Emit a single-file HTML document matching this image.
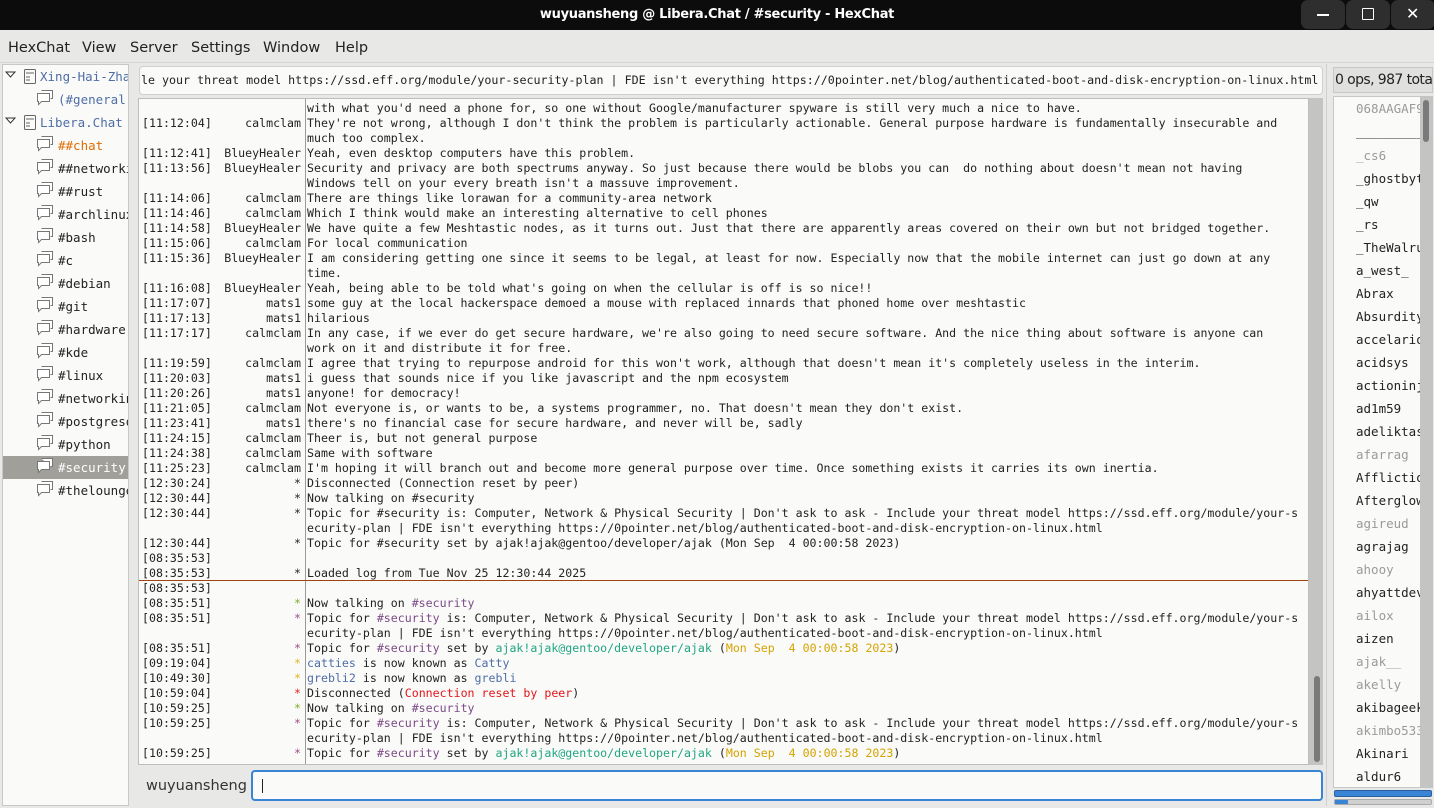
<!DOCTYPE html>
<html><head><meta charset="utf-8"><style>
*{margin:0;padding:0;box-sizing:border-box}
body{width:1434px;height:808px;background:#e8e8e7;font-family:"DejaVu Sans","Liberation Sans",sans-serif;position:relative;overflow:hidden;color:#222}
.title{position:absolute;left:0;top:0;width:1434px;height:30px;background:#0c0c0c;color:#fff;font-weight:bold;font-size:13px;text-align:center;line-height:30px;letter-spacing:-0.3px}
.wb{position:absolute;top:0;width:44px;height:29px;background:#2e2e2e;border-radius:7px}
.menu{position:absolute;top:32px;left:0;width:1434px;height:32px;font-size:14.5px;line-height:32px}
.menu span{position:absolute}
.tree{position:absolute;left:2px;top:64px;width:127px;height:742px;background:#fafaf9;border:1px solid #c8c8c8;overflow:hidden;font-family:"DejaVu Sans Mono",monospace;font-size:12.5px}
.ti{position:absolute;height:23px;line-height:23px;white-space:nowrap}
.sel{position:absolute;left:0;width:127px;height:23px;background:#a09f99}
.mono{font-family:"DejaVu Sans Mono","Liberation Mono",monospace}
.topic{position:absolute;left:139px;top:66px;width:1184px;height:29px;background:#fafaf9;border:1px solid #cfcfcf;border-radius:4px;font-size:11.65px;line-height:27px;padding-left:1px;white-space:pre;overflow:hidden}
.chat{position:absolute;left:138px;top:98px;width:1171px;height:667px;background:#fafaf9;border:1px solid #bdbdbd;overflow:hidden;font-size:11.6px}
.sep{position:absolute;left:166px;top:0;width:1px;height:667px;background:#9a9a9a}
.r{position:absolute;left:0;height:15px;line-height:15px;white-space:pre;width:1170px;margin-top:1px}
.t{position:absolute;left:3px}
.n{position:absolute;right:1008px;text-align:right}
.x{position:absolute;left:168px}
.ch{color:#7c4a86}.aj{color:#22a582}.dt{color:#d4a300}.nk{color:#4f6ea6}.rd{color:#e2161a}
.sg{color:#7cae2a}.sp{color:#9b4f88}.sy{color:#e0b520}.sr{color:#e22}
.ul{position:absolute;left:1333px;top:96px;width:88px;height:692px;background:#fafaf9;border:1px solid #c8c8c8;overflow:hidden;font-size:12.5px}
.u{position:absolute;left:22px;height:23px;line-height:23px;white-space:nowrap}
.g{color:#9a9a9a}
</style></head><body>
<div class="title">wuyuansheng @ Libera.Chat / #security - HexChat</div>
<div class="wb" style="left:1301px"><div style="position:absolute;left:16px;top:14px;width:12px;height:1.5px;background:#fff"></div></div>
<div class="wb" style="left:1346px"><div style="position:absolute;left:16px;top:8px;width:12px;height:12px;border:1.5px solid #fff;border-radius:1px"></div></div>
<div class="wb" style="left:1391px"><div style="position:absolute;left:15px;top:6px;color:#fff;font-size:16px;line-height:16px">✕</div></div>
<div class="menu"><span style="left:8px">HexChat</span><span style="left:82px">View</span><span style="left:130px">Server</span><span style="left:191px">Settings</span><span style="left:263px">Window</span><span style="left:335px">Help</span></div>
<div style="position:absolute;left:0;top:62px;width:1434px;height:1px;background:#d6d6d6"></div>

<div class="tree">
<div class="sel" style="top:391px"></div>
<svg width="127" height="440" style="position:absolute;left:0;top:0" fill="none" stroke="#666" stroke-width="1">
<path d="M3 7h9l-4.5 5z" fill="#fff" stroke="#333"/><path d="M3 53h9l-4.5 5z" fill="#fff" stroke="#333"/>
<rect x="21.5" y="4.5" width="11" height="14" rx="1"/><path d="M23 8h8M23 12h4M23 15h4"/>
<rect x="21.5" y="50.5" width="11" height="14" rx="1"/><path d="M23 54h8M23 58h4M23 61h4"/>
</svg>
<div class="ti" style="left:37px;top:0;color:#4f6ea6">Xing-Hai-Zhan</div>
<div class="ti" style="left:55px;top:23px;color:#4f6ea6">(#general)</div>
<div class="ti" style="left:37px;top:46px;color:#4f6ea6">Libera.Chat</div>
<div class="ti" style="left:55px;top:69px;color:#e06c00">##chat</div>
<div class="ti" style="left:55px;top:92px">##networking</div>
<div class="ti" style="left:55px;top:115px">##rust</div>
<div class="ti" style="left:55px;top:138px">#archlinux</div>
<div class="ti" style="left:55px;top:161px">#bash</div>
<div class="ti" style="left:55px;top:184px">#c</div>
<div class="ti" style="left:55px;top:207px">#debian</div>
<div class="ti" style="left:55px;top:230px">#git</div>
<div class="ti" style="left:55px;top:253px">#hardware</div>
<div class="ti" style="left:55px;top:276px">#kde</div>
<div class="ti" style="left:55px;top:299px">#linux</div>
<div class="ti" style="left:55px;top:322px">#networking</div>
<div class="ti" style="left:55px;top:345px">#postgresql</div>
<div class="ti" style="left:55px;top:368px">#python</div>
<div class="ti" style="left:55px;top:391px;color:#fff">#security</div>
<div class="ti" style="left:55px;top:414px">#thelounge</div>
<svg width="30" height="440" style="position:absolute;left:32px;top:0" fill="#fff" stroke="#777" stroke-width="1">
<defs><g id="ic"><path d="M6.5 3.5h11v8h-2"/><path d="M2.5 6.5h12v8h-8l-3 3v-3h-1z"/></g></defs>
<use href="#ic" y="22"/><use href="#ic" y="68"/><use href="#ic" y="91"/><use href="#ic" y="114"/><use href="#ic" y="137"/><use href="#ic" y="160"/><use href="#ic" y="183"/><use href="#ic" y="206"/><use href="#ic" y="229"/><use href="#ic" y="252"/><use href="#ic" y="275"/><use href="#ic" y="298"/><use href="#ic" y="321"/><use href="#ic" y="344"/><use href="#ic" y="367"/><use href="#ic" y="390"/><use href="#ic" y="413"/>
</svg>
</div>

<div class="topic mono">le your threat model https://ssd.eff.org/module/your-security-plan | FDE isn't everything https://0pointer.net/blog/authenticated-boot-and-disk-encryption-on-linux.html</div>

<div class="chat mono">
<div class="sep"></div>
<div style="position:absolute;left:0;top:481px;width:1170px;height:1px;background:#a0430e"></div>
<div class="r" style="top:1px"><span class="x">with what you'd need a phone for, so one without Google/manufacturer spyware is still very much a nice to have.</span></div>
<div class="r" style="top:16px"><span class="t">[11:12:04]</span><span class="n">calmclam</span><span class="x">They're not wrong, although I don't think the problem is particularly actionable. General purpose hardware is fundamentally insecurable and</span></div>
<div class="r" style="top:31px"><span class="x">much too complex.</span></div>
<div class="r" style="top:46px"><span class="t">[11:12:41]</span><span class="n">BlueyHealer</span><span class="x">Yeah, even desktop computers have this problem.</span></div>
<div class="r" style="top:61px"><span class="t">[11:13:56]</span><span class="n">BlueyHealer</span><span class="x">Security and privacy are both spectrums anyway. So just because there would be blobs you can  do nothing about doesn't mean not having</span></div>
<div class="r" style="top:76px"><span class="x">Windows tell on your every breath isn't a massuve improvement.</span></div>
<div class="r" style="top:91px"><span class="t">[11:14:06]</span><span class="n">calmclam</span><span class="x">There are things like lorawan for a community-area network</span></div>
<div class="r" style="top:106px"><span class="t">[11:14:46]</span><span class="n">calmclam</span><span class="x">Which I think would make an interesting alternative to cell phones</span></div>
<div class="r" style="top:121px"><span class="t">[11:14:58]</span><span class="n">BlueyHealer</span><span class="x">We have quite a few Meshtastic nodes, as it turns out. Just that there are apparently areas covered on their own but not bridged together.</span></div>
<div class="r" style="top:136px"><span class="t">[11:15:06]</span><span class="n">calmclam</span><span class="x">For local communication</span></div>
<div class="r" style="top:151px"><span class="t">[11:15:36]</span><span class="n">BlueyHealer</span><span class="x">I am considering getting one since it seems to be legal, at least for now. Especially now that the mobile internet can just go down at any</span></div>
<div class="r" style="top:166px"><span class="x">time.</span></div>
<div class="r" style="top:181px"><span class="t">[11:16:08]</span><span class="n">BlueyHealer</span><span class="x">Yeah, being able to be told what's going on when the cellular is off is so nice!!</span></div>
<div class="r" style="top:196px"><span class="t">[11:17:07]</span><span class="n">mats1</span><span class="x">some guy at the local hackerspace demoed a mouse with replaced innards that phoned home over meshtastic</span></div>
<div class="r" style="top:211px"><span class="t">[11:17:13]</span><span class="n">mats1</span><span class="x">hilarious</span></div>
<div class="r" style="top:226px"><span class="t">[11:17:17]</span><span class="n">calmclam</span><span class="x">In any case, if we ever do get secure hardware, we're also going to need secure software. And the nice thing about software is anyone can</span></div>
<div class="r" style="top:241px"><span class="x">work on it and distribute it for free.</span></div>
<div class="r" style="top:256px"><span class="t">[11:19:59]</span><span class="n">calmclam</span><span class="x">I agree that trying to repurpose android for this won't work, although that doesn't mean it's completely useless in the interim.</span></div>
<div class="r" style="top:271px"><span class="t">[11:20:03]</span><span class="n">mats1</span><span class="x">i guess that sounds nice if you like javascript and the npm ecosystem</span></div>
<div class="r" style="top:286px"><span class="t">[11:20:26]</span><span class="n">mats1</span><span class="x">anyone! for democracy!</span></div>
<div class="r" style="top:301px"><span class="t">[11:21:05]</span><span class="n">calmclam</span><span class="x">Not everyone is, or wants to be, a systems programmer, no. That doesn't mean they don't exist.</span></div>
<div class="r" style="top:316px"><span class="t">[11:23:41]</span><span class="n">mats1</span><span class="x">there's no financial case for secure hardware, and never will be, sadly</span></div>
<div class="r" style="top:331px"><span class="t">[11:24:15]</span><span class="n">calmclam</span><span class="x">Theer is, but not general purpose</span></div>
<div class="r" style="top:346px"><span class="t">[11:24:38]</span><span class="n">calmclam</span><span class="x">Same with software</span></div>
<div class="r" style="top:361px"><span class="t">[11:25:23]</span><span class="n">calmclam</span><span class="x">I'm hoping it will branch out and become more general purpose over time. Once something exists it carries its own inertia.</span></div>
<div class="r" style="top:376px"><span class="t">[12:30:24]</span><span class="n">*</span><span class="x">Disconnected (Connection reset by peer)</span></div>
<div class="r" style="top:391px"><span class="t">[12:30:44]</span><span class="n">*</span><span class="x">Now talking on #security</span></div>
<div class="r" style="top:406px"><span class="t">[12:30:44]</span><span class="n">*</span><span class="x">Topic for #security is: Computer, Network &amp; Physical Security | Don't ask to ask - Include your threat model https://ssd.eff.org/module/your-s</span></div>
<div class="r" style="top:421px"><span class="x">ecurity-plan | FDE isn't everything https://0pointer.net/blog/authenticated-boot-and-disk-encryption-on-linux.html</span></div>
<div class="r" style="top:436px"><span class="t">[12:30:44]</span><span class="n">*</span><span class="x">Topic for #security set by ajak!ajak@gentoo/developer/ajak (Mon Sep  4 00:00:58 2023)</span></div>
<div class="r" style="top:451px"><span class="t">[08:35:53]</span></div>
<div class="r" style="top:466px"><span class="t">[08:35:53]</span><span class="n">*</span><span class="x">Loaded log from Tue Nov 25 12:30:44 2025</span></div>
<div class="r" style="top:481px"><span class="t">[08:35:53]</span></div>
<div class="r" style="top:496px"><span class="t">[08:35:51]</span><span class="n sg">*</span><span class="x">Now talking on <span class="ch">#security</span></span></div>
<div class="r" style="top:511px"><span class="t">[08:35:51]</span><span class="n sp">*</span><span class="x">Topic for <span class="ch">#security</span> is: Computer, Network &amp; Physical Security | Don't ask to ask - Include your threat model https://ssd.eff.org/module/your-s</span></div>
<div class="r" style="top:526px"><span class="x">ecurity-plan | FDE isn't everything https://0pointer.net/blog/authenticated-boot-and-disk-encryption-on-linux.html</span></div>
<div class="r" style="top:541px"><span class="t">[08:35:51]</span><span class="n sp">*</span><span class="x">Topic for <span class="ch">#security</span> set by <span class="aj">ajak!ajak@gentoo/developer/ajak</span> (<span class="dt">Mon Sep  4 00:00:58 2023</span>)</span></div>
<div class="r" style="top:556px"><span class="t">[09:19:04]</span><span class="n sy">*</span><span class="x"><span class="nk">catties</span> is now known as <span class="nk">Catty</span></span></div>
<div class="r" style="top:571px"><span class="t">[10:49:30]</span><span class="n sy">*</span><span class="x"><span class="nk">grebli2</span> is now known as <span class="nk">grebli</span></span></div>
<div class="r" style="top:586px"><span class="t">[10:59:04]</span><span class="n sr">*</span><span class="x">Disconnected (<span class="rd">Connection reset by peer</span>)</span></div>
<div class="r" style="top:601px"><span class="t">[10:59:25]</span><span class="n sg">*</span><span class="x">Now talking on <span class="ch">#security</span></span></div>
<div class="r" style="top:616px"><span class="t">[10:59:25]</span><span class="n sp">*</span><span class="x">Topic for <span class="ch">#security</span> is: Computer, Network &amp; Physical Security | Don't ask to ask - Include your threat model https://ssd.eff.org/module/your-s</span></div>
<div class="r" style="top:631px"><span class="x">ecurity-plan | FDE isn't everything https://0pointer.net/blog/authenticated-boot-and-disk-encryption-on-linux.html</span></div>
<div class="r" style="top:646px"><span class="t">[10:59:25]</span><span class="n sp">*</span><span class="x">Topic for <span class="ch">#security</span> set by <span class="aj">ajak!ajak@gentoo/developer/ajak</span> (<span class="dt">Mon Sep  4 00:00:58 2023</span>)</span></div>
</div>
<div style="position:absolute;left:1309px;top:98px;width:14px;height:667px;background:#c4c4c3"></div>
<div style="position:absolute;left:1314px;top:676px;width:6px;height:86px;background:#7a7a7a;border-radius:3px"></div>

<div style="position:absolute;left:146px;top:778px;font-size:14.5px;color:#333">wuyuansheng</div>
<div style="position:absolute;left:251px;top:770px;width:1072px;height:31px;background:#fafaf9;border:2px solid #3a84d6;border-radius:4px"><div style="position:absolute;left:9px;top:7px;width:1px;height:14px;background:#222"></div></div>

<div style="position:absolute;left:1326px;top:64px;width:1px;height:742px;background:#d0d0d0"></div>
<div style="position:absolute;left:1333px;top:67px;width:100px;height:26px;background:#e0e0df;border:1px solid #c8c8c8;font-size:14px;letter-spacing:-0.6px;line-height:24px;white-space:nowrap;overflow:hidden;padding-left:1px">0 ops, 987 total</div>
<div class="ul mono">
<div class="u g" style="top:0">068AAGAF9</div>
<div class="u" style="top:23px">_________</div>
<div class="u g" style="top:47px">_cs6</div>
<div class="u" style="top:70px">_ghostbyte</div>
<div class="u" style="top:93px">_qw</div>
<div class="u" style="top:116px">_rs</div>
<div class="u" style="top:139px">_TheWalrus</div>
<div class="u" style="top:162px">a_west_</div>
<div class="u" style="top:185px">Abrax</div>
<div class="u" style="top:208px">Absurdity</div>
<div class="u" style="top:231px">accelarion</div>
<div class="u" style="top:254px">acidsys</div>
<div class="u" style="top:277px">actioninja</div>
<div class="u" style="top:300px">ad1m59</div>
<div class="u" style="top:323px">adeliktas</div>
<div class="u g" style="top:346px">afarrag</div>
<div class="u" style="top:369px">Affliction</div>
<div class="u" style="top:392px">Afterglow</div>
<div class="u g" style="top:415px">agireud</div>
<div class="u" style="top:438px">agrajag</div>
<div class="u g" style="top:461px">ahooy</div>
<div class="u" style="top:484px">ahyattdev</div>
<div class="u g" style="top:507px">ailox</div>
<div class="u" style="top:530px">aizen</div>
<div class="u g" style="top:553px">ajak__</div>
<div class="u g" style="top:576px">akelly</div>
<div class="u" style="top:599px">akibageek</div>
<div class="u g" style="top:622px">akimbo533</div>
<div class="u" style="top:645px">Akinari</div>
<div class="u" style="top:668px">aldur6</div>
</div>
<div style="position:absolute;left:1420px;top:96px;width:13px;height:692px;background:#c4c4c3"></div>
<div style="position:absolute;left:1423px;top:100px;width:6px;height:42px;background:#7a7a7a;border-radius:3px"></div>
<div style="position:absolute;left:1334px;top:790px;width:98px;height:7px;background:#3a84d6;border:1px solid #2b5f9e;border-radius:2px"></div>
<div style="position:absolute;left:1334px;top:799px;width:98px;height:6px;background:#d0d0d0;border:1px solid #aaa;border-radius:2px"><div style="width:13px;height:4px;background:#3a84d6"></div></div>
</body></html>
